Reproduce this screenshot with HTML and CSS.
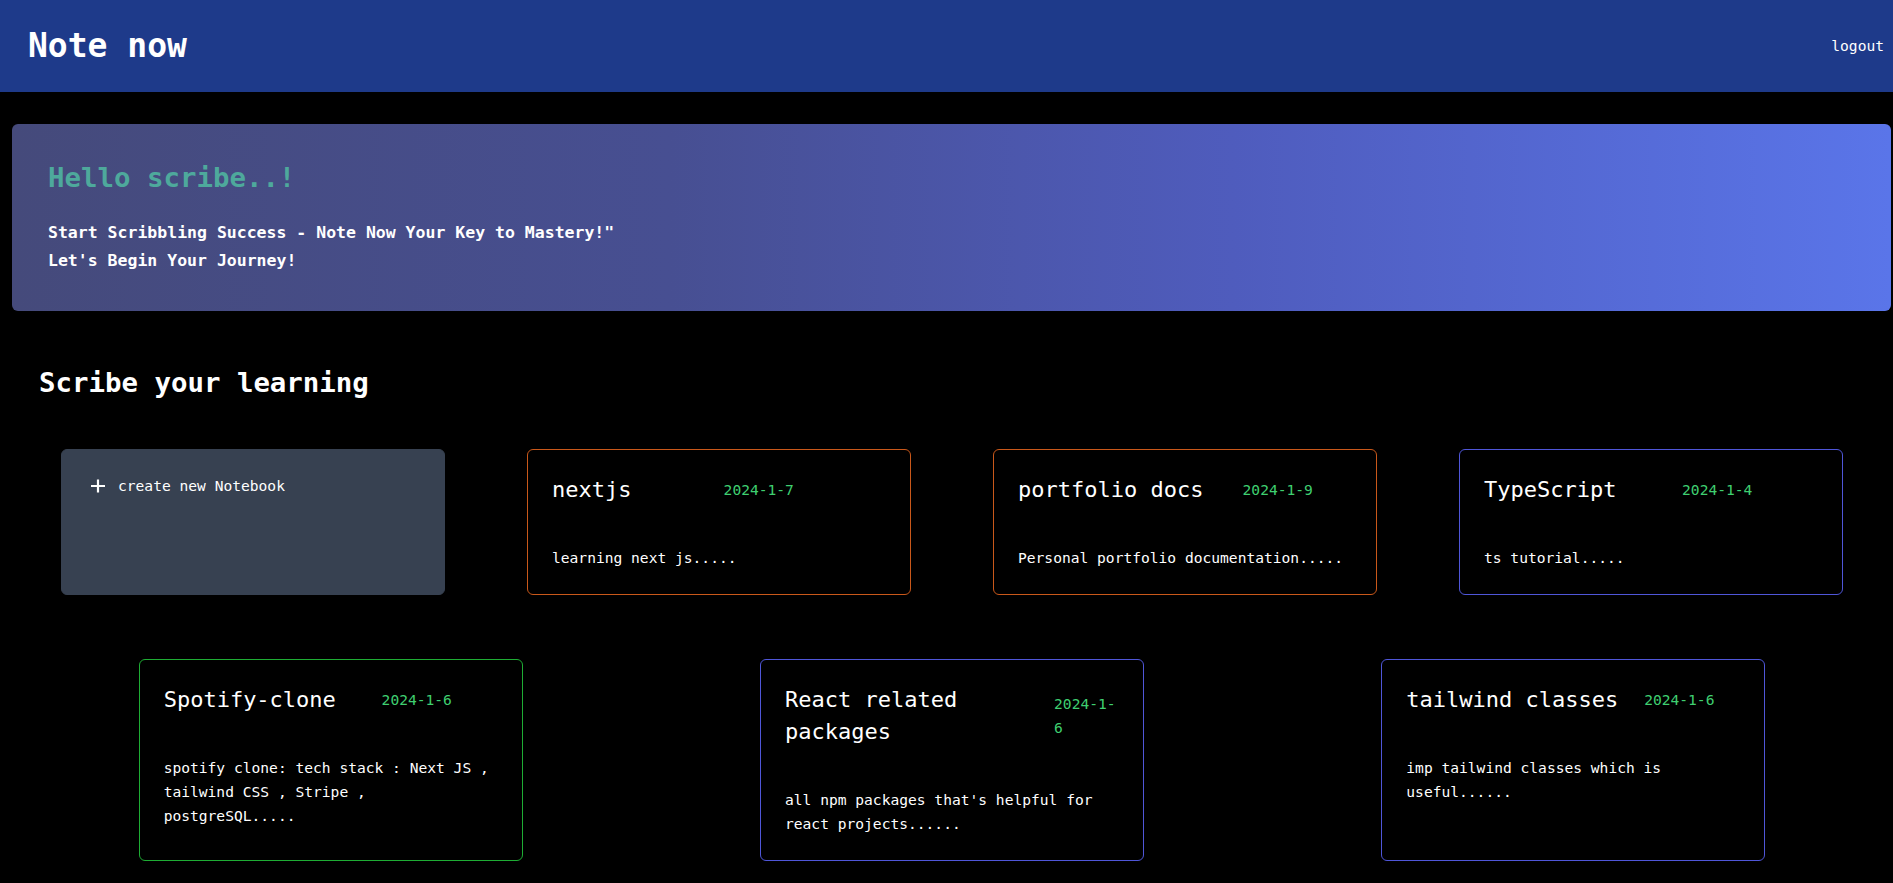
FILE: index.html
```html
<!DOCTYPE html>
<html lang="en">
<head>
<meta charset="utf-8">
<title>Note now</title>
<link rel="stylesheet" href="styles.css">
</head>
<body>
<header class="topbar">
  <h1 class="brand">Note now</h1>
  <button class="logout">logout</button>
</header>

<section class="hero">
  <h2 class="hero-title">Hello scribe..!</h2>
  <p class="hero-text">Start Scribbling Success - Note Now Your Key to Mastery!"<br>Let's Begin Your Journey!</p>
</section>

<main class="content">
  <h2 class="section-title">Scribe your learning</h2>
  <div class="cards">
    <div class="card card-new">
      <div class="new-row">
        <svg class="plus" width="24" height="24" viewBox="0 0 24 24" aria-hidden="true">
          <path d="M12 5.5v13M5 12h14" stroke="#fff" stroke-width="2.2" fill="none"/>
        </svg>
        <span>create new Notebook</span>
      </div>
    </div>

    <div class="card border-orange">
      <div class="card-head"><h3 class="card-title">nextjs</h3><span class="card-date">2024-1-7</span></div>
      <p class="card-desc">learning next js.....</p>
    </div>

    <div class="card border-orange">
      <div class="card-head"><h3 class="card-title">portfolio docs</h3><span class="card-date">2024-1-9</span></div>
      <p class="card-desc">Personal portfolio documentation.....</p>
    </div>

    <div class="card border-indigo">
      <div class="card-head"><h3 class="card-title">TypeScript</h3><span class="card-date">2024-1-4</span></div>
      <p class="card-desc">ts tutorial.....</p>
    </div>

    <div class="card border-green">
      <div class="card-head"><h3 class="card-title">Spotify-clone</h3><span class="card-date">2024-1-6</span></div>
      <p class="card-desc">spotify clone: tech stack : Next JS , tailwind CSS , Stripe , postgreSQL.....</p>
    </div>

    <div class="card border-indigo">
      <div class="card-head"><h3 class="card-title">React related packages</h3><span class="card-date">2024-1-6</span></div>
      <p class="card-desc">all npm packages that's helpful for react projects......</p>
    </div>

    <div class="card border-indigo">
      <div class="card-head"><h3 class="card-title">tailwind classes</h3><span class="card-date">2024-1-6</span></div>
      <p class="card-desc">imp tailwind classes which is useful......</p>
    </div>
  </div>
</main>
</body>
</html>
```

FILE: styles.css
```css
* {
  box-sizing: border-box;
}

html, body {
  margin: 0;
  padding: 0;
  background: #000;
  color: #fff;
  font-family: "DejaVu Sans Mono", "Liberation Mono", monospace;
}

h1, h2, h3, p {
  margin: 0;
}

.topbar {
  height: 92px;
  background: #1e3a8a;
  display: flex;
  align-items: center;
  justify-content: space-between;
  padding: 0 9px 0 28px;
}

.brand {
  font-size: 33px;
  line-height: 40px;
  font-weight: 700;
  color: #fff;
}

.logout {
  background: none;
  border: none;
  padding: 0;
  color: #fff;
  font-family: inherit;
  font-size: 14.6px;
  line-height: 24px;
  cursor: pointer;
}

.hero {
  margin: 32px 2px 0 12px;
  padding: 36px 36px 36px;
  border-radius: 6px;
  background: linear-gradient(to right, #454a7b 0%, #474f92 35%, #4f5cbd 65%, #5a75e9 100%);
}

.hero-title {
  font-size: 27.4px;
  line-height: 36px;
  font-weight: 700;
  color: #4ea99c;
  margin-bottom: 23px;
}

.hero-text {
  font-size: 16.5px;
  line-height: 28px;
  font-weight: 700;
  color: #fff;
}

.content {
  padding: 0 9px 40px 20px;
}

.section-title {
  margin: 54px 0 0 19px;
  font-size: 27.4px;
  line-height: 36px;
  font-weight: 700;
}

.cards {
  margin-top: 48px;
  display: flex;
  flex-wrap: wrap;
  justify-content: space-around;
  row-gap: 64px;
}

.card {
  width: 384px;
  padding: 24px;
  border-radius: 6px;
  border: 1px solid transparent;
  background: #000;
}

.card-new {
  background: #374151;
  border-color: #374151;
}

.new-row {
  display: flex;
  align-items: center;
  font-size: 14.6px;
  line-height: 24px;
}

.plus {
  flex: none;
  margin-right: 8px;
}

.border-orange {
  border-color: #c9581a;
}

.border-indigo {
  border-color: #4f56d8;
}

.border-green {
  border-color: #1ead34;
}

.card-head {
  display: flex;
  align-items: center;
}

.card-title {
  font-size: 22px;
  line-height: 32px;
  font-weight: 400;
  color: #fff;
}

.card-date {
  margin: 0 auto;
  font-size: 14.6px;
  line-height: 24px;
  color: #3fcf70;
  overflow-wrap: anywhere;
}

.card-desc {
  margin-top: 40px;
  font-size: 14.6px;
  line-height: 24px;
  color: #fff;
}
```
